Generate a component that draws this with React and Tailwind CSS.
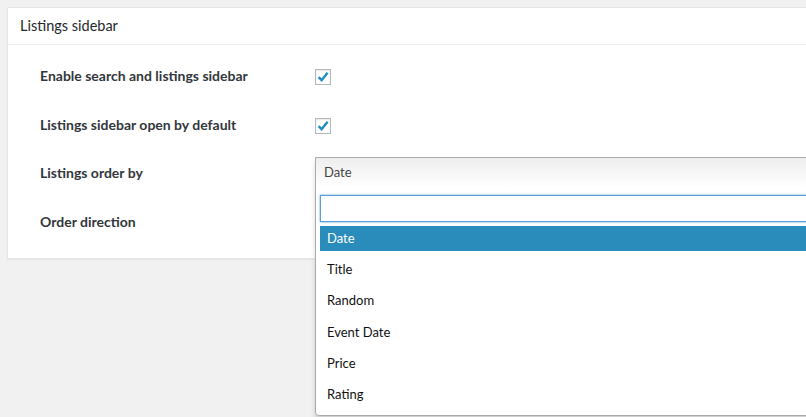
import React from "react";

const font = { fontFamily: "Lato, 'Noto Sans', sans-serif" };

function Checkbox() {
  return (
    <span className="mt-[3px] flex h-4 w-4 items-center justify-center border border-[#b4b9be] bg-white shadow-[inset_0_1px_2px_rgba(0,0,0,0.1)]">
      <svg viewBox="0 0 14 14" className="h-[14px] w-[14px]">
        <polyline points="2.6,7.2 5.6,10.2 11.6,2.8" fill="none" stroke="#1e8cbe" strokeWidth="2.4" />
      </svg>
    </span>
  );
}

const options = ["Date", "Title", "Random", "Event Date", "Price", "Rating"];

export default function App() {
  return (
    <div className="relative h-[417px] w-[806px] overflow-hidden bg-[#f1f1f1] pl-[7px] pt-[7px] text-[#23282d]" style={font}>
      {/* Settings card */}
      <div className="w-[830px] border border-[#e5e5e5] bg-white shadow-[0_1px_1px_rgba(0,0,0,0.04)]">
        <div className="flex h-[37px] items-center border-b border-[#eee] px-3 text-[14.5px]">Listings sidebar</div>

        <div className="pb-3 pt-[6px]">
          <div className="flex h-[48.75px] items-center">
            <div className="w-[307px] pl-8 text-[14px] font-bold text-[#32373c]">Enable search and listings sidebar</div>
            <Checkbox />
          </div>
          <div className="flex h-[48.75px] items-center">
            <div className="w-[307px] pl-8 text-[14px] font-bold text-[#32373c]">Listings sidebar open by default</div>
            <Checkbox />
          </div>
          <div className="flex h-[48.75px] items-center">
            <div className="w-[307px] pl-8 text-[14px] font-bold text-[#32373c]">Listings order by</div>
            <div className="relative h-[48.75px] flex-1">
              {/* Open select */}
              <div className="absolute left-0 top-[8.5px] z-10 w-[520px] rounded-bl-[4px] border border-[#aaa] bg-white shadow-[0_4px_5px_rgba(0,0,0,0.15)]">
                <div className="flex h-[30px] items-center bg-gradient-to-b from-[#eee] to-white px-2 text-[13px] text-[#444]">Date</div>
                <div className="px-1 pb-2 pt-[7px]">
                  <div className="h-[27px] border border-[#5b9dd9] bg-white shadow-[0_0_2px_rgba(30,140,190,0.8)]" />
                  <ul className="mt-1 flex flex-col gap-[6.25px] text-[13px] text-[#111]">
                    {options.map((o, i) => (
                      <li
                        key={o}
                        className={`flex h-[25px] items-center px-[7px] ${i === 0 ? "bg-[#298cba] text-white" : ""}`}
                      >
                        {o}
                      </li>
                    ))}
                  </ul>
                </div>
              </div>
            </div>
          </div>
          <div className="flex h-[48.75px] items-center">
            <div className="w-[307px] pl-8 text-[14px] font-bold text-[#32373c]">Order direction</div>
          </div>
        </div>
      </div>
    </div>
  );
}
